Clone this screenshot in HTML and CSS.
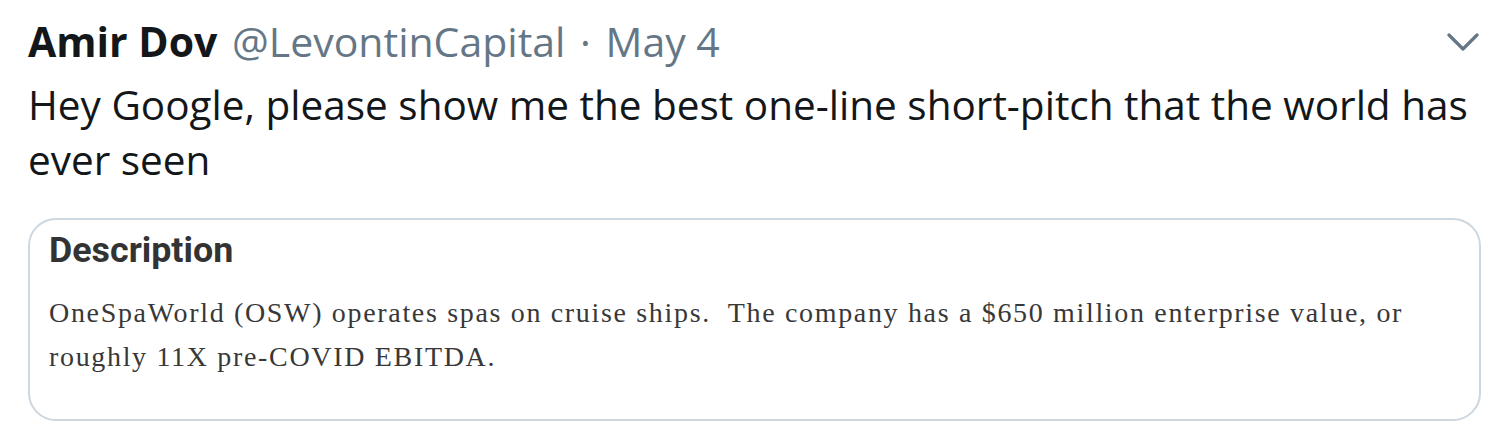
FILE: index.html
```html
<!DOCTYPE html>
<html>
<head>
<meta charset="utf-8">
<link rel="stylesheet" href="styles.css">
</head>
<body>
<article class="tweet">
  <header class="tweet-head">
    <div class="author">
      <span class="name">Amir Dov</span>
      <span class="handle">@LevontinCapital</span>
      <span class="dot">·</span>
      <span class="date">May 4</span>
    </div>
    <svg class="caret" width="32" height="20" viewBox="0 0 32 20">
      <path d="M2 2 L16 16 L30 2" fill="none" stroke="#657786" stroke-width="3.2" stroke-linecap="round" stroke-linejoin="round"/>
    </svg>
  </header>
  <p class="tweet-text">Hey Google, please show me the best one-line short-pitch that the world has ever seen</p>
  <div class="card">
    <h2 class="card-title">Description</h2>
    <p class="card-body">OneSpaWorld (OSW) operates spas on cruise ships.&nbsp; The company has a $650 million enterprise value, or roughly 11X pre-COVID EBITDA.</p>
  </div>
</article>
</body>
</html>
```
FILE: styles.css
```css
html, body {
  margin: 0;
  padding: 0;
  background: #ffffff;
}
.tweet {
  padding: 14px 24px 0 28px;
  width: 1453px;
  box-sizing: content-box;
}
.tweet-head {
  display: flex;
  align-items: center;
  justify-content: space-between;
  height: 55px;
}
.author {
  font-family: "Open Sans", "Noto Sans", sans-serif;
  font-size: 41px;
  line-height: 55px;
  color: #657786;
  white-space: nowrap;
}
.name {
  font-weight: 700;
  color: #14171a;
  margin-right: 4px;
}
.dot {
  margin: 0 4px;
}
.caret {
  margin-right: 2px;
  margin-top: 2px;
}
.tweet-text {
  margin: 8px 0 0 0;
  font-family: "Open Sans", "Noto Sans", sans-serif;
  font-size: 40.5px;
  line-height: 55px;
  color: #14171a;
}
.card {
  margin-top: 31px;
  border: 2px solid #cdd7df;
  border-radius: 28px;
  padding: 10px 20px 0 19px;
  box-sizing: border-box;
  height: 203px;
}
.card-title {
  margin: 0;
  font-family: Roboto, "Liberation Sans", sans-serif;
  font-weight: 700;
  font-size: 35.8px;
  line-height: 40px;
  color: #333333;
}
.card-body {
  margin: 21px 0 0 0;
  font-family: "Liberation Serif", "Times New Roman", serif;
  font-size: 28px;
  letter-spacing: 1.67px;
  line-height: 44px;
  color: #383838;
  width: 1390px;
}
```
